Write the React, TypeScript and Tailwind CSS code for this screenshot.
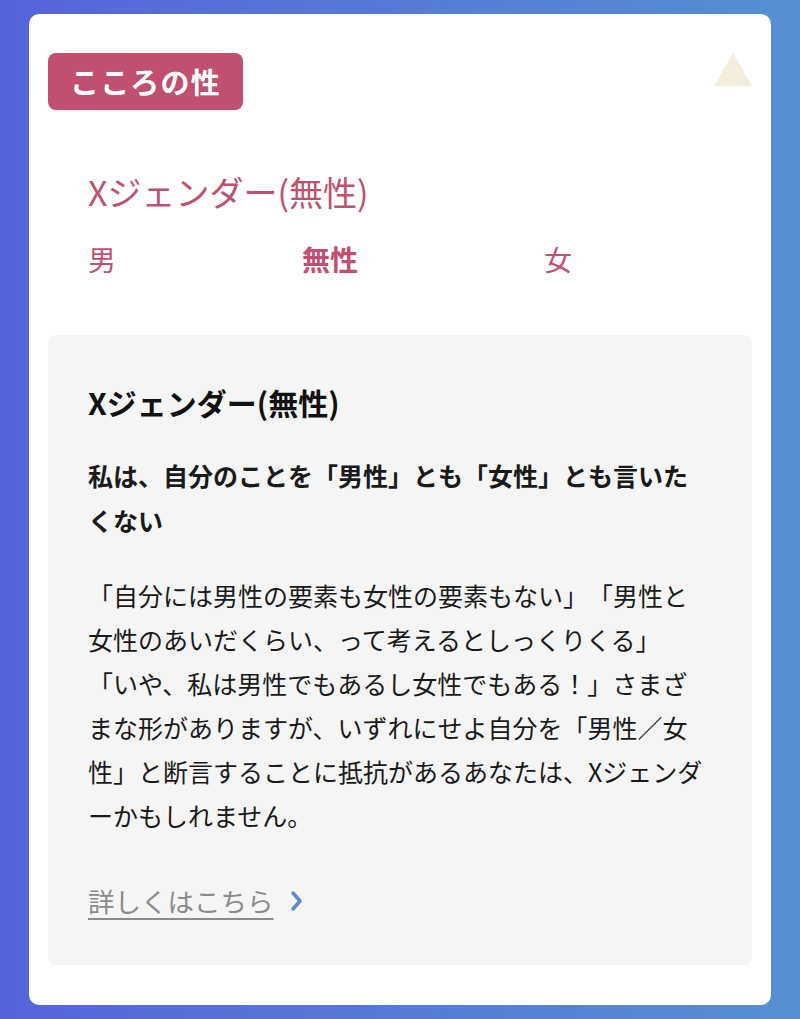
import React from "react";

const jp = { fontFamily: '"Noto Sans CJK JP", "Noto Sans", sans-serif' };

export default function App() {
  return (
    <div
      className="w-[800px] h-[1019px] bg-gradient-to-r from-[#5563da] to-[#5690d2] pt-[14px] px-[29px] [text-spacing-trim:space-all]"
      style={jp}
    >
      <div className="bg-white rounded-[10px] px-[19px] pt-[39px] pb-[38px] h-[991px]">
        <div className="flex items-start justify-between">
          <div className="bg-[#c04f70] rounded-[8px] h-[57px] px-[22px] flex items-center text-white font-bold text-[29px] tracking-[0.04em] leading-none">
            こころの性
          </div>
          <svg width="38" height="33" viewBox="0 0 38 33">
            <polygon points="19,0 38,33 0,33" fill="#f2eedb" />
          </svg>
        </div>

        <div className="pl-[40px] mt-[62px] text-[#c0506f]">
          <div className="text-[34px] leading-[40px]">Xジェンダー(無性)</div>
          <div className="flex justify-between w-[484px] mt-[29px] text-[28px] leading-[36px]">
            <span>男</span>
            <span className="font-bold">無性</span>
            <span>女</span>
          </div>
        </div>

        <div className="mt-[58px] bg-[#f5f5f5] rounded-[8px] pl-[40px] pr-[30px] pt-[48px] pb-[42px] text-[#1a1a1a]">
          <div className="text-[30px] leading-[38px] font-bold text-[#111]">Xジェンダー(無性)</div>
          <div className="mt-[32px] text-[25px] leading-[45px] font-bold whitespace-nowrap">
            私は、自分のことを「男性」とも「女性」とも言いた
            <br />
            くない
          </div>
          <div className="mt-[30px] text-[25px] leading-[44px] whitespace-nowrap">
            「自分には男性の要素も女性の要素もない」「男性と
            <br />
            女性のあいだくらい、って考えるとしっくりくる」
            <br />
            「いや、私は男性でもあるし女性でもある！」さまざ
            <br />
            まな形がありますが、いずれにせよ自分を「男性／女
            <br />
            性」と断言することに抵抗があるあなたは、Xジェンダ
            <br />
            ーかもしれません。
          </div>
          <div className="mt-[42px] flex items-center gap-[16px] h-[44px]">
            <span className="text-[26.5px] leading-[44px] text-[#8a8a8a] underline decoration-[1.5px] underline-offset-[6px]">
              詳しくはこちら
            </span>
            <svg width="13" height="22" viewBox="0 0 13 22">
              <polyline
                points="3,3 10,11 3,19"
                fill="none"
                stroke="#5b8bd6"
                strokeWidth="3.5"
                strokeLinecap="round"
                strokeLinejoin="round"
              />
            </svg>
          </div>
        </div>
      </div>
    </div>
  );
}
